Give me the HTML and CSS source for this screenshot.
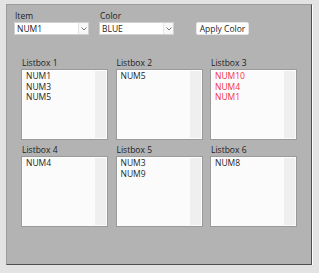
FILE: index.html
```html
<!DOCTYPE html>
<html lang="en">
<head>
<meta charset="UTF-8">
<meta name="viewport" content="width=device-width, initial-scale=1.0">
<title>Listbox Colors</title>
<link rel="stylesheet" href="styles.css">
</head>
<body>
  <div id="panel">
    <div class="top-row">
      <div class="field">
        <div class="field-label">Item</div>
        <div class="combo">
          <span class="combo-text">NUM1</span>
          <span class="combo-arrow"><svg width="6" height="4" viewBox="0 0 6 4"><path d="M0.5 0.5 L3 3 L5.5 0.5" fill="none" stroke="#7a7a7a" stroke-width="1"/></svg></span>
        </div>
      </div>
      <div class="field">
        <div class="field-label">Color</div>
        <div class="combo">
          <span class="combo-text">BLUE</span>
          <span class="combo-arrow"><svg width="6" height="4" viewBox="0 0 6 4"><path d="M0.5 0.5 L3 3 L5.5 0.5" fill="none" stroke="#7a7a7a" stroke-width="1"/></svg></span>
        </div>
      </div>
      <button class="apply-btn">Apply Color</button>
    </div>

    <div class="list-grid">
      <div class="list-cell">
        <div class="list-label">Listbox 1</div>
        <div class="listbox">
          <ul class="items"><li>NUM1</li><li>NUM3</li><li>NUM5</li></ul>
          <div class="track"></div>
        </div>
      </div>
      <div class="list-cell">
        <div class="list-label">Listbox 2</div>
        <div class="listbox">
          <ul class="items"><li>NUM5</li></ul>
          <div class="track"></div>
        </div>
      </div>
      <div class="list-cell">
        <div class="list-label">Listbox 3</div>
        <div class="listbox">
          <ul class="items red"><li>NUM10</li><li>NUM4</li><li>NUM1</li></ul>
          <div class="track"></div>
        </div>
      </div>
      <div class="list-cell">
        <div class="list-label">Listbox 4</div>
        <div class="listbox">
          <ul class="items"><li>NUM4</li></ul>
          <div class="track"></div>
        </div>
      </div>
      <div class="list-cell">
        <div class="list-label">Listbox 5</div>
        <div class="listbox">
          <ul class="items"><li>NUM3</li><li>NUM9</li></ul>
          <div class="track"></div>
        </div>
      </div>
      <div class="list-cell">
        <div class="list-label">Listbox 6</div>
        <div class="listbox">
          <ul class="items"><li>NUM8</li></ul>
          <div class="track"></div>
        </div>
      </div>
    </div>
  </div>
</body>
</html>
```

FILE: styles.css
```css
body {
  margin: 0;
  padding: 0;
  background-color: #e3e3e3;
  font-family: "Open Sans", "Noto Sans", sans-serif;
  font-size: 8.5px;
  color: #1e1e1e;
}
#panel {
  box-sizing: border-box;
  width: 306px;
  height: 261px;
  margin: 4px 0 0 6px;
  padding: 5px 0 0 7px;
  background-color: #b3b3b3;
  border-top: 1px solid #9c9c9c;
  border-left: 1px solid #9c9c9c;
  border-right: 1px solid #4e4e4e;
  border-bottom: 1px solid #4e4e4e;
  box-shadow: 1px 1px 0 #ffffff;
}
.top-row {
  display: flex;
  align-items: flex-end;
}
.field {
  margin-right: 10px;
}
.field-label {
  line-height: 11px;
  margin-bottom: 1px;
  padding-left: 1px;
}
.combo {
  box-sizing: border-box;
  display: flex;
  align-items: center;
  width: 75px;
  height: 13px;
  background-color: #ffffff;
  border: 1px solid #d0d0d0;
}
.combo-text {
  flex: 1;
  padding-left: 2px;
  line-height: 11px;
}
.combo-arrow {
  box-sizing: border-box;
  display: flex;
  align-items: center;
  justify-content: center;
  width: 10px;
  height: 11px;
  margin-right: 0;
  border-left: 1px solid #e4e4e4;
  background-color: #f7f7f7;
}
.apply-btn {
  box-sizing: border-box;
  width: 53px;
  height: 13px;
  margin-left: 12px;
  padding: 0;
  font-family: inherit;
  font-size: 8.5px;
  line-height: 11px;
  color: #1e1e1e;
  background-color: #ffffff;
  border: 1px solid #e6e6e6;
  border-radius: 2px;
}
.list-grid {
  display: grid;
  grid-template-columns: 87px 87px 87px;
  column-gap: 7.5px;
  row-gap: 4px;
  margin: 22px 0 0 7px;
}
.list-label {
  line-height: 11px;
  margin-bottom: 1px;
  padding-left: 1px;
}
.listbox {
  box-sizing: border-box;
  display: flex;
  height: 71px;
  background-color: #fbfbfb;
  border: 1px solid #9a9a9a;
  box-shadow: inset 1px 1px 0 #ffffff;
}
.items {
  flex: 1;
  list-style: none;
  margin: 0;
  padding: 1px 0 0 4px;
  line-height: 10.5px;
}
.items.red {
  color: #f0323f;
}
.track {
  width: 11px;
  margin: 1px 1px 1px 0;
  background-color: #efefef;
}
```
